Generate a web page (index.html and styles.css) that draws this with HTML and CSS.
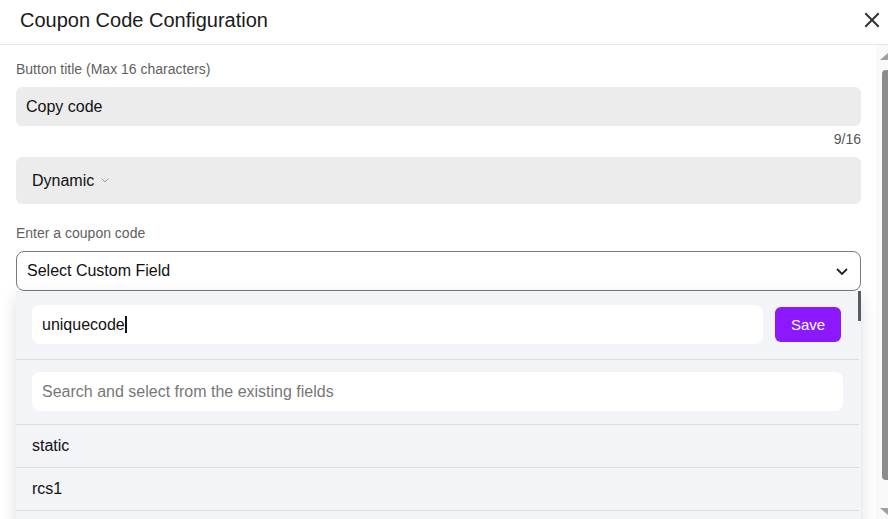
FILE: index.html
```html
<!DOCTYPE html>
<html lang="en">
<head>
    <meta charset="UTF-8">
    <title>Coupon Code Configuration</title>
    <link rel="stylesheet" href="styles.css">
</head>
<body>

    <div class="modal">
        <div class="modal-head">
            <h1>Coupon Code Configuration</h1>
            <button class="close-btn" type="button" aria-label="Close">
                <svg width="16" height="16" viewBox="0 0 16 16">
                    <path d="M2 2 L14 14 M14 2 L2 14" stroke="#333" stroke-width="2" stroke-linecap="square" fill="none"/>
                </svg>
            </button>
        </div>

        <div class="modal-main">
            <div class="modal-body">
                <label class="field-label">Button title (Max 16 characters)</label>
                <div class="text-input">Copy code</div>
                <div class="counter">9/16</div>

                <div class="type-box">
                    <span>Dynamic</span>
                    <svg width="8" height="5" viewBox="0 0 8 5">
                        <path d="M0.5 0.5 L4 4 L7.5 0.5" stroke="#9a9a9a" stroke-width="1" fill="none"/>
                    </svg>
                </div>

                <label class="field-label label-gap">Enter a coupon code</label>
                <div class="select-wrap">
                    <div class="select">
                        <span>Select Custom Field</span>
                        <svg width="12" height="7" viewBox="0 0 12 7">
                            <path d="M1 1 L6 6 L11 1" stroke="#222" stroke-width="1.8" fill="none"/>
                        </svg>
                    </div>

                    <div class="dropdown">
                        <div class="dd-scroll"></div>
                        <div class="dd-row create-row">
                            <div class="dd-input">uniquecode<span class="caret"></span></div>
                            <button class="save-btn" type="button">Save</button>
                        </div>
                        <div class="dd-row search-row">
                            <div class="dd-input placeholder">Search and select from the existing fields</div>
                        </div>
                        <div class="dd-item">static</div>
                        <div class="dd-item">rcs1</div>
                        <div class="dd-item"></div>
                    </div>
                </div>
            </div>

            <div class="page-scroll">
                <svg width="12" height="474" viewBox="0 0 12 474">
                    <polygon points="4,15 12,8 20,15" fill="#a0a0a0"/>
                    <rect x="6" y="25" width="12" height="410" rx="4" fill="#8b8b8b"/>
                    <polygon points="4,463 12,470 20,463" fill="#a0a0a0"/>
                </svg>
            </div>
        </div>
    </div>

</body>
</html>
```

FILE: styles.css
```css
* {
    margin: 0;
    padding: 0;
    box-sizing: border-box;
    font-family: 'Liberation Sans', Arial, sans-serif;
}

body, html {
    width: 100%;
    height: 100%;
    overflow: hidden;
    background-color: white;
}

.modal {
    height: 519px;
    display: flex;
    flex-direction: column;
}

.modal-head {
    height: 45px;
    border-bottom: 1px solid #e6e6e6;
    display: flex;
    justify-content: space-between;
    align-items: center;
    padding: 0 8px 4px 20px;
}

.modal-head h1 {
    font-size: 20px;
    font-weight: normal;
    color: #1a1a1a;
}

.close-btn {
    border: none;
    background: none;
    width: 16px;
    height: 16px;
    display: flex;
    cursor: pointer;
}

.modal-main {
    flex: 1;
    display: flex;
    overflow: hidden;
}

.modal-body {
    flex: 1;
    padding: 0 15px 0 16px;
}

.field-label {
    display: block;
    margin-top: 16px;
    font-size: 14px;
    line-height: 16px;
    color: #5f5f5f;
}

.label-gap {
    margin-top: 21px;
}

.text-input {
    margin-top: 10px;
    height: 39px;
    background-color: #ececec;
    border-radius: 6px;
    padding: 0 10px;
    display: flex;
    align-items: center;
    font-size: 16px;
    color: #111;
}

.counter {
    margin-top: 5px;
    text-align: right;
    font-size: 14px;
    line-height: 16px;
    color: #555;
}

.type-box {
    margin-top: 10px;
    height: 47px;
    background-color: #ececec;
    border-radius: 6px;
    padding: 0 16px;
    display: flex;
    align-items: center;
    gap: 7px;
    font-size: 16px;
    color: #111;
}

.select-wrap {
    position: relative;
    margin-top: 10px;
}

.select {
    height: 40px;
    border: 1px solid #7a7a7a;
    border-radius: 8px;
    padding: 0 12px 0 10px;
    display: flex;
    justify-content: space-between;
    align-items: center;
    font-size: 16px;
    color: #111;
}

.dropdown {
    position: absolute;
    top: 100%;
    left: 0;
    right: 0;
    background-color: #f3f4f8;
    box-shadow: 0 6px 16px rgba(0,0,0,0.14);
    padding-right: 2px;
}

.dd-scroll {
    position: absolute;
    top: 0;
    right: 0;
    width: 3px;
    height: 30px;
    background-color: #5b5b66;
}

.dd-row {
    display: flex;
    align-items: center;
    border-bottom: 1px solid #dcdde1;
}

.create-row {
    padding: 14px 18px 15px 16px;
    gap: 12px;
}

.search-row {
    padding: 12px 16px 13px 16px;
}

.dd-input {
    flex: 1;
    height: 39px;
    background-color: white;
    border-radius: 8px;
    padding: 0 10px;
    display: flex;
    align-items: center;
    font-size: 16px;
    color: #111;
}

.dd-input.placeholder {
    color: #777;
}

.caret {
    display: inline-block;
    width: 2px;
    height: 17px;
    background-color: #111;
}

.save-btn {
    width: 66px;
    height: 35px;
    border: none;
    border-radius: 6px;
    background-color: #8b18ff;
    color: white;
    font-size: 15px;
    cursor: pointer;
}

.dd-item {
    height: 43px;
    padding-left: 16px;
    display: flex;
    align-items: center;
    border-bottom: 1px solid #dcdde1;
    font-size: 16px;
    color: #111;
}

.page-scroll {
    width: 12px;
    background-color: #f9f9f9;
    overflow: hidden;
}

.page-scroll svg {
    display: block;
    overflow: hidden;
}
```
